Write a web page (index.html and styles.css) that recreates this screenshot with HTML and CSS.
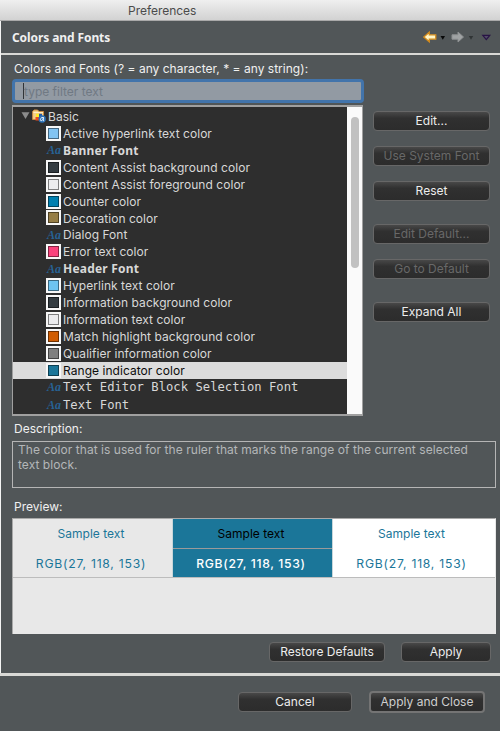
FILE: index.html
```html
<!DOCTYPE html>
<html lang="en">
<head>
<meta charset="utf-8">
<title>Preferences</title>
<link rel="stylesheet" href="styles.css">
</head>
<body>
<header class="titlebar"><span>Preferences</span></header>
<main class="page">
  <div class="heading">
    <h1>Colors and Fonts</h1>
    <svg class="nav" width="72" height="16" viewBox="0 0 72 16">
      <path d="M.8 8 L6.3 3.200 V5.800 H12.800 V10.200 H6.300 V12.800 Z" fill="#fff6c8" stroke="#d28a1c" stroke-width="1.3"/>
      <path d="M17.500 7 h4.500 l-2.200 3.800z" fill="#080808"/>
      <path d="M29 5.800 H35 V3 L40.500 8 L35 13 V10.200 H29 Z" fill="#a0a3a4" stroke="#8d9091"/>
      <path d="M45.800 7 h4.400 l-2.200 3.800z" fill="#303435"/>
      <path d="M59.800 6.300 h7 l-3.500 4.300z" fill="#514b65" stroke="#281345" stroke-width="1.200"/>
    </svg>
  </div>
  <div class="content">
    <label class="filter-label">Colors and Fonts (? = any character, * = any string):</label>
    <div class="filter"><i class="caret"></i><span>type filter text</span></div>
    <div class="middle">
      <div class="tree">
        <div class="rows">
          <div class="row root">
            <svg class="twisty" width="9" height="8" viewBox="0 0 9 8"><path d="M.5 .2h8L4.500 7z" fill="#8c8c8c"/></svg>
            <svg class="folder" width="14" height="14" viewBox="0 0 14 14">
              <path d="M.6 2.500 L2 1 H5.600 L7 2.500 H11.500 V10.500 H.6Z" fill="#f5cf88" stroke="#c98b42"/>
              <path d="M1.500 3.500H11" stroke="#fff0c6"/>
              <rect x="4" y="4.800" width="3.500" height="3.300" fill="#ffec25"/><rect x="7" y="4.800" width="3" height="3.300" fill="#2455a4"/>
              <rect x="3.500" y="8" width="3.500" height="3.500" fill="#e84c23"/>
              <circle cx="10.200" cy="10" r="3.700" fill="#2c72b8"/>
              <path d="M11.500 8.500c-3-.9-3.900 3.200-2.300 3.200 1 0 2-1.700 2.300-3.200l-.4 3.200h1" fill="none" stroke="#e7f1fb"/>
            </svg>
            <span class="t-basic">Basic</span>
          </div>
          <div class="row"><i class="sw c-active"></i><span>Active hyperlink text color</span></div>
          <div class="row"><i class="aa">Aa</i><b>Banner Font</b></div>
          <div class="row"><i class="sw c-dark"></i><span>Content Assist background color</span></div>
          <div class="row"><i class="sw c-light"></i><span>Content Assist foreground color</span></div>
          <div class="row"><i class="sw c-counter"></i><span>Counter color</span></div>
          <div class="row"><i class="sw c-deco"></i><span>Decoration color</span></div>
          <div class="row"><i class="aa">Aa</i><span>Dialog Font</span></div>
          <div class="row"><i class="sw c-error"></i><span>Error text color</span></div>
          <div class="row"><i class="aa">Aa</i><b>Header Font</b></div>
          <div class="row"><i class="sw c-link"></i><span>Hyperlink text color</span></div>
          <div class="row"><i class="sw c-dark"></i><span>Information background color</span></div>
          <div class="row"><i class="sw c-light"></i><span>Information text color</span></div>
          <div class="row"><i class="sw c-match"></i><span>Match highlight background color</span></div>
          <div class="row"><i class="sw c-gray"></i><span>Qualifier information color</span></div>
          <div class="row selected"><i class="sw c-range"></i><span>Range indicator color</span></div>
          <div class="row mono"><i class="aa">Aa</i><code>Text Editor Block Selection Font</code></div>
          <div class="row mono last"><i class="aa">Aa</i><code>Text Font</code></div>
        </div>
        <div class="scroll"><div class="thumb"></div></div>
      </div>
      <div class="side">
        <button>Edit...</button>
        <button disabled>Use System Font</button>
        <button>Reset</button>
        <button class="gap" disabled>Edit Default...</button>
        <button disabled>Go to Default</button>
        <button class="gap">Expand All</button>
      </div>
    </div>
    <div class="label desc-label">Description:</div>
    <div class="desc">The color that is used for the ruler that marks the range of the current selected<br>text block.</div>
    <div class="label prev-label">Preview:</div>
    <div class="preview">
      <div class="cells">
        <div class="cell plain"><div>Sample text</div><div class="rgb">RGB(27, 118, 153)</div></div>
        <div class="cell fill"><div>Sample text</div><div class="rgb">RGB(27, 118, 153)</div></div>
        <div class="cell white"><div>Sample text</div><div class="rgb">RGB(27, 118, 153)</div></div>
      </div>
    </div>
    <div class="page-actions"><button class="restore">Restore Defaults</button><button class="apply">Apply</button></div>
  </div>
</main>
<footer class="footer"><button class="cancel">Cancel</button><button class="close">Apply and Close</button></footer>
</body>
</html>
```

FILE: styles.css
```css
* { box-sizing: border-box; }
body {
  margin: 0; width: 500px; height: 731px; overflow: hidden;
  background: #515658; color: #f0f0f0;
  font: 12px/17px Inter, "Liberation Sans", sans-serif;
  white-space: nowrap;
}
.titlebar {
  height: 21px; border-bottom: 1px solid #a9a9a9;
  background: linear-gradient(#efefef, #d2d2d2);
  color: #4b4b4b; padding: 2px 0 0 128px; letter-spacing: -.03px;
}
.page { height: 652px; border-left: 1px solid #f4f4f4; }
.heading {
  height: 34px; border-bottom: 2px solid #d9d9d6;
  display: flex; justify-content: space-between; padding: 0 5px 0 11px;
}
h1 { margin: 8px 0 0; font: bold 12px/17px "Noto Sans", sans-serif; letter-spacing: -.09px; }
.nav { margin-top: 8px; }
.content { padding: 5px 4px 0 11px; }
.filter-label { display: block; height: 19px; padding-left: 2px; letter-spacing: .02px; }
.filter {
  width: 352px; height: 24px; border: 3px solid #4274ab; border-radius: 4px;
  background: #929aa3; color: #707983; display: flex; align-items: center; padding-left: 8px;
}
.caret { width: 1px; height: 16px; background: #303438; }
.middle { display: flex; margin-top: 2px; height: 311px; }
.tree {
  width: 351px; height: 311px; border: 1px solid #a0a0a0; border-width: 2px 1px 2px 1px;
  background: #2e2e2e; color: #d8d8d8; display: flex;
}
.rows { width: 334px; padding-top: 1px; letter-spacing: .045px; }
.row { height: 16.93px; display: flex; align-items: center; padding-left: 33px; }
.root { padding-left: 8px; }
.folder { margin: 0 2px 0 2px; }
.sw {
  width: 15px; height: 15px; flex: none; margin-right: 2px; background: #333b40;
  border: 2px solid #f7f7f7; box-shadow: inset 0 0 0 1px #0007;
}
.c-active { background: #82c4f2; }
.c-light { background: #ececee; }
.c-counter { background: #0080b0; }
.c-deco { background: #967e46; }
.c-error { background: #fa427c; }
.c-link { background: #6ec4f0; }
.c-match { background: #d05c02; }
.c-gray { background: #808080; }
.c-range { background: #1b7699; }
.aa { width: 16px; margin: 1px 0 0 1px; flex: none; color: #276294; font: italic bold 12px/15px "Liberation Serif", serif; }
.row b { font: bold 12px/17px "Noto Sans", sans-serif; letter-spacing: .2px; }
.row code { font: 12.2px/17px "DejaVu Sans Mono", monospace; letter-spacing: .02px; }
.selected { background: #dcdcdc; color: #0c0c0c; }
.last { height: 19px; }
.scroll { flex: 1; background: #fafafa; padding: 10px 0 0 4px; }
.thumb { width: 8px; height: 151px; border-radius: 4px; background: #c1c1c1; }
.side { display: flex; flex-direction: column; gap: 15px; padding: 6px 0 0 10px; }
.side .gap { margin-top: 8px; }
button {
  height: 20px; width: 117px; padding: 0 0 1px; border: 1px solid #676767; border-radius: 4px;
  background: linear-gradient(#484848, #303030 35%, #2c2c2c);
  color: #ededed; font: 12px/17px Inter, sans-serif;
}
button:disabled { color: #686868; }
.label { padding-left: 2px; }
.desc-label { margin-top: 4px; }
.desc { margin-top: 4px; width: 484px; height: 47px; border: 1px solid #b5b5b5; padding: 0 5px; color: #b4b7b8; line-height: 15px; letter-spacing: .05px; }
.prev-label { margin-top: 10px; }
.preview { margin-top: 3px; width: 484px; height: 116px; background: #e8e8e8; border: 1px solid #a9a9a9; border-bottom: 0; border-right-color: #e8e8e8; }
.cells { display: grid; grid-template-columns: 159px 161px 1fr; height: 59px; border-bottom: 1px solid #bcbcbc; }
.cell { text-align: center; color: #1b7699; line-height: 29px; }
.cell div { height: 30px; padding-right: 3px; }
.white div { padding-right: 5px; }
.cell .rgb { height: 28px; font-size: 12.2px; letter-spacing: .75px; }
.fill { background: #1b7699; border-left: 1px solid #c8d6da; border-right: 1px solid #c8d6da; color: #fff; }
.fill div:first-child { color: #000; border-bottom: 1px solid #9a9a9a; }
.fill .rgb { font-weight: 500; letter-spacing: .65px; }
.white { background: #fff; }
.page-actions { display: flex; gap: 16px; margin: 8px 0 0 257px; }
.page-actions .restore { width: 116px; }
.page-actions .apply { width: 90px; }
.footer {
  border-top: 3px solid #d9d9d6; height: 58px;
  display: flex; align-items: center; gap: 17px; padding: 0 0 3px 238px;
}
.footer .cancel { width: 114px; }
.footer .close { height: 22px; width: 116px; border: 2px solid #747474; color: #cfcfcf; }
```
